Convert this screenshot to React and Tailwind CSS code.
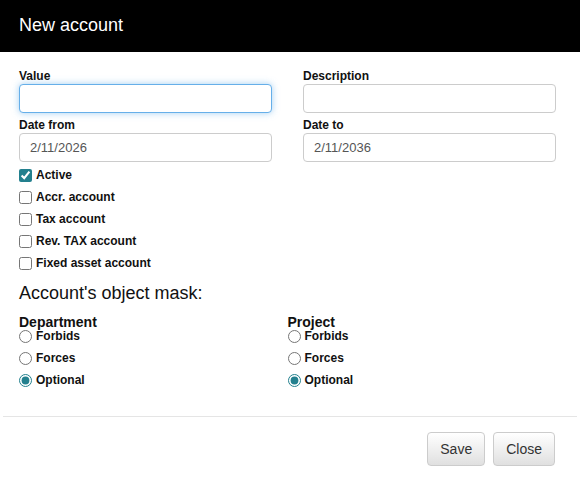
import React from "react";

const font = { fontFamily: '"Liberation Sans", Arial, sans-serif' };

function Field({ label, value, focused }) {
  return (
    <div className="flex flex-col">
      <label className="text-[12px] font-bold leading-[14px] mb-px text-[#111]">{label}</label>
      <input
        type="text"
        defaultValue={value}
        className={
          "h-[29px] w-full rounded-[4px] border bg-white px-[10px] text-[13px] text-[#555] outline-none " +
          (focused
            ? "border-[#66afe9] shadow-[0_0_7px_rgba(102,175,233,0.6)]"
            : "border-[#ccc]")
        }
        style={font}
      />
    </div>
  );
}

function Check({ label, checked }) {
  return (
    <label className="flex h-[22px] items-center">
      <input
        type="checkbox"
        defaultChecked={checked}
        className="m-0 h-[13px] w-[13px] accent-[#23808e]"
      />
      <span className="ml-[4px] text-[12px] font-bold text-[#111]">{label}</span>
    </label>
  );
}

function RadioGroup({ title, name }) {
  return (
    <div className="flex flex-col">
      <div className="text-[14px] font-bold leading-[14px] text-[#111]">{title}</div>
      <div className="-mt-[2px] flex flex-col gap-[4px]">
        {["Forbids", "Forces", "Optional"].map((o) => (
          <label key={o} className="flex h-[18px] items-center">
            <input
              type="radio"
              name={name}
              defaultChecked={o === "Optional"}
              className="m-0 h-[13px] w-[13px] accent-[#23808e]"
            />
            <span className="ml-[4px] text-[12px] font-bold text-[#111]">{o}</span>
          </label>
        ))}
      </div>
    </div>
  );
}

export default function App() {
  return (
    <div className="h-[479px] w-[580px] overflow-hidden bg-white" style={font}>
      <div className="h-[52px] bg-black px-[19px] pt-[12px]">
        <h1 className="text-[18px] font-normal leading-normal text-white">New account</h1>
      </div>
      <div className="pl-[19px] pr-[24px] pt-[17px]">
        <div className="grid grid-cols-2 gap-x-[31px] gap-y-[5px]">
          <Field label="Value" value="" focused />
          <Field label="Description" value="" />
          <Field label="Date from" value="2/11/2026" />
          <Field label="Date to" value="2/11/2036" />
        </div>
        <div className="mt-[2px] flex flex-col">
          <Check label="Active" checked />
          <Check label="Accr. account" />
          <Check label="Tax account" />
          <Check label="Rev. TAX account" />
          <Check label="Fixed asset account" />
        </div>
        <div className="mt-[6px] text-[18px] leading-normal text-[#111]">Account's object mask:</div>
        <div className="mt-[8px] grid grid-cols-2">
          <RadioGroup title="Department" name="dep" />
          <RadioGroup title="Project" name="proj" />
        </div>
      </div>
      <div className="mx-[3px] mt-[27px] border-t border-[#e5e5e5] pr-[22px] pt-[15px]">
        <div className="flex justify-end gap-[8px]">
          <button className="h-[34px] rounded-[4px] border border-[#ccc] bg-gradient-to-b from-white to-[#e0e0e0] px-[12px] text-[14px] text-[#333]">
            Save
          </button>
          <button className="h-[34px] rounded-[4px] border border-[#ccc] bg-gradient-to-b from-white to-[#e0e0e0] px-[12px] text-[14px] text-[#333]">
            Close
          </button>
        </div>
      </div>
    </div>
  );
}
